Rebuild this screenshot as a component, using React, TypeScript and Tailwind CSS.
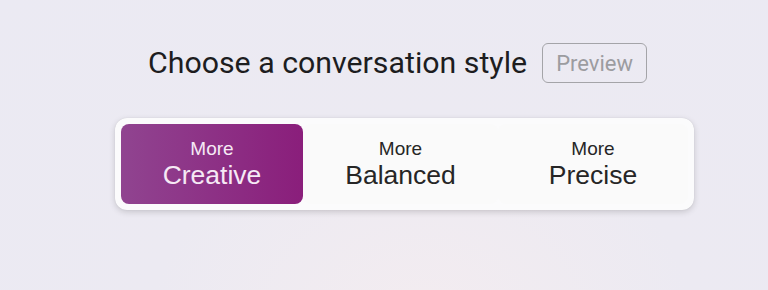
import React from "react";

const styles = [
  { id: "creative", label: "Creative", width: "w-[182px]" },
  { id: "balanced", label: "Balanced", width: "w-[195px]" },
  { id: "precise", label: "Precise", width: "w-[190px]" },
];

export default function App() {
  const active = "creative";

  return (
    <div className="w-[768px] h-[290px] overflow-hidden bg-[radial-gradient(ellipse_at_55%_110%,#f3ecf0_0%,#eceaf2_45%,#ebeaf3_100%)]">
      {/* heading row */}
      <div className="flex items-center pt-[43px] ml-[148px] gap-[15px]">
        <h1 className="text-[30.3px] leading-[40px] text-[#1d1d1f] font-['Roboto',sans-serif]">
          Choose a conversation style
        </h1>
        <span className="h-[40px] w-[105px] flex items-center justify-center rounded-md border-[1.5px] border-[#a4a4a8] text-[22px] text-[#9c9ca0] font-['Roboto',sans-serif]">
          Preview
        </span>
      </div>

      {/* style picker */}
      <div className="mt-[35px] ml-[115px] w-[579px] h-[92px] p-[6px] flex rounded-xl bg-[#fbfbfc] shadow-[0_2px_6px_rgba(0,0,0,0.16),0_0_1px_rgba(0,0,0,0.12)]">
        {styles.map((s) => {
          const on = s.id === active;
          return (
            <button
              key={s.id}
              className={
                s.width +
                " h-[80px] flex flex-col items-center justify-center rounded-lg font-['Liberation_Sans',Arial,sans-serif] " +
                (on
                  ? "bg-[linear-gradient(90deg,#904490,#8a1e7b)] text-[#f6e9f5]"
                  : "bg-[#fafafa] text-[#262626]")
              }
            >
              <span className="text-[19px] leading-[22px]">More</span>
              <span className="text-[26.5px] leading-[31px]">{s.label}</span>
            </button>
          );
        })}
      </div>
    </div>
  );
}
